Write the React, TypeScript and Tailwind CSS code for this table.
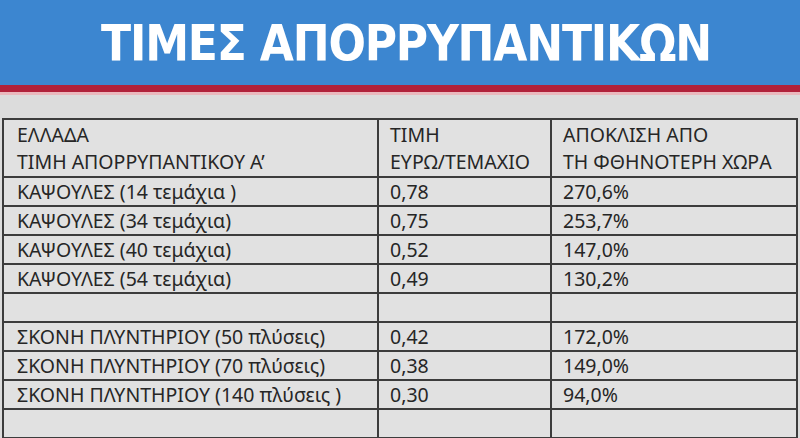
const ROWS: [string, string, string][] = [
	["ΚΑΨΟΥΛΕΣ (14 τεμάχια )", "0,78", "270,6%"],
	["ΚΑΨΟΥΛΕΣ (34 τεμάχια)", "0,75", "253,7%"],
	["ΚΑΨΟΥΛΕΣ (40 τεμάχια)", "0,52", "147,0%"],
	["ΚΑΨΟΥΛΕΣ (54 τεμάχια)", "0,49", "130,2%"],
	["", "", ""],
	["ΣΚΟΝΗ ΠΛΥΝΤΗΡΙΟΥ (50 πλύσεις)", "0,42", "172,0%"],
	["ΣΚΟΝΗ ΠΛΥΝΤΗΡΙΟΥ (70 πλύσεις)", "0,38", "149,0%"],
	["ΣΚΟΝΗ ΠΛΥΝΤΗΡΙΟΥ (140 πλύσεις )", "0,30", "94,0%"],
	["", "", ""],
];

export default function App() {
	return (
		<div className="h-[438px] w-[800px] overflow-hidden bg-[#dcdcdc] font-['Noto_Sans',sans-serif] text-[#262626]">
			{/* Title band */}
			<div className="flex h-[85px] items-center justify-center bg-[#3c86d0]">
				<h1 className="pl-[12px] pt-[2px] font-['DejaVu_Sans_Condensed','DejaVu_Sans',sans-serif] text-[49px] font-bold leading-none tracking-[-1.2px] text-white">
					ΤΙΜΕΣ ΑΠΟΡΡΥΠΑΝΤΙΚΩΝ
				</h1>
			</div>
			<div className="h-[7px] bg-[#b1213a]" />
			<div className="h-[3px] bg-[#eab8bd]" />

			{/* Table */}
			<div className="pl-[2px] pt-[23px]">
				<table className="w-[794px] table-fixed border-collapse bg-[#e1e1e1] text-[19.5px]">
					<colgroup>
						<col className="w-[375px]" />
						<col className="w-[173px]" />
						<col className="w-[246px]" />
					</colgroup>
					<tbody>
						<tr className="h-[58px] align-top leading-[27px]">
							<td className="border-2 border-[#3c3c3c] pl-[13px] pt-[1px]">
								ΕΛΛΑΔΑ
								<br />
								ΤΙΜΗ ΑΠΟΡΡΥΠΑΝΤΙΚΟΥ Α’
							</td>
							<td className="border-2 border-[#3c3c3c] pl-[11px] pt-[1px]">
								ΤΙΜΗ
								<br />
								ΕΥΡΩ/ΤΕΜΑΧΙΟ
							</td>
							<td className="border-2 border-[#3c3c3c] pl-[11px] pt-[1px]">
								ΑΠΟΚΛΙΣΗ ΑΠΟ
								<br />
								ΤΗ ΦΘΗΝΟΤΕΡΗ ΧΩΡΑ
							</td>
						</tr>
						{ROWS.map((r, i) => (
							<tr key={i} className="h-[29px] leading-[25px]">
								<td className="border-2 border-[#3c3c3c] pl-[13px]">{r[0]}</td>
								<td className="border-2 border-[#3c3c3c] pl-[11px]">{r[1]}</td>
								<td className="border-2 border-[#3c3c3c] pl-[11px]">{r[2]}</td>
							</tr>
						))}
					</tbody>
				</table>
			</div>
		</div>
	);
}
